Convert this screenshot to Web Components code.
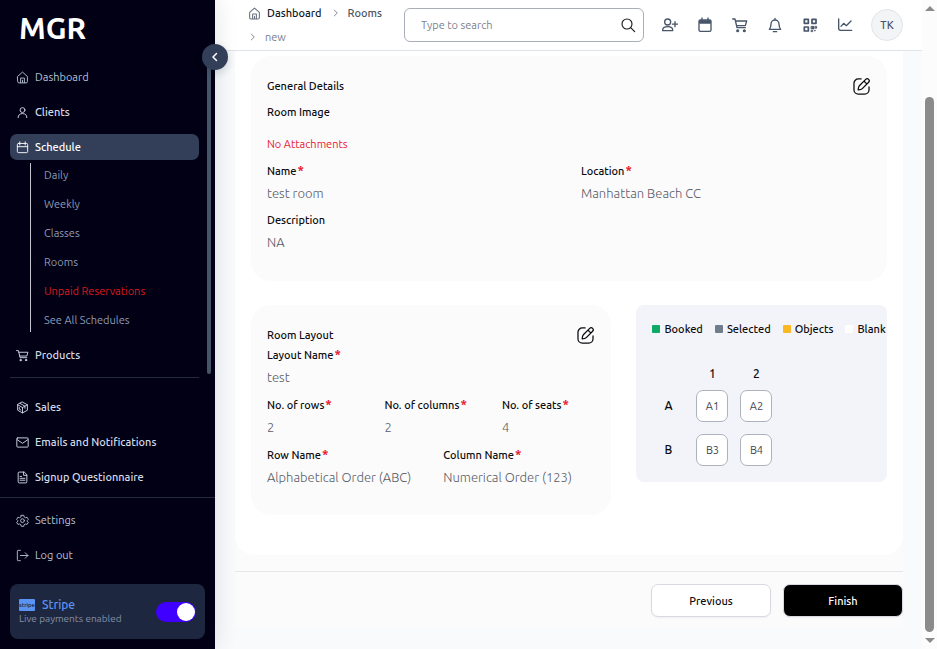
<!DOCTYPE html>
<html lang="en">
<head>
<meta charset="utf-8">
<meta name="viewport" content="width=device-width, initial-scale=1">
<title>MGR - Rooms</title>
<style>
  html, body { height: 100%; margin: 0; }
  body {
    font-family: Ubuntu, "Noto Sans", sans-serif;
    font-size: 11px; line-height: 16px; color: #0b0b0f; background: #f8fafc;
    --ink: #0b0b0f; --muted: #585c68; --danger: #e8192f;
    --body: 11px; --value: 13px;
  }
</style>
</head>
<body>
<app-shell>
  <app-sidebar slot="side"></app-sidebar>
  <app-header slot="head"></app-header>
  <room-review slot="main"></room-review>
  <scroll-rail slot="rail"></scroll-rail>
</app-shell>
<script>
const define = (name, html, setup) => {
  const template = document.createElement('template');
  template.innerHTML = html;
  customElements.define(name, class extends HTMLElement {
    connectedCallback() {
      if (this.shadowRoot) return;
      this.attachShadow({ mode: 'open' }).append(template.content.cloneNode(true));
      if (setup) setup.call(this, this.shadowRoot);
    }
  });
};

const ICONS = {
  home: '<path d="M3 10 12 2l9 8v9.500a2.500 2.500 0 0 1-2.500 2.500h-13A2.500 2.500 0 0 1 3 19.500z"/><path d="M8.500 21.500v-8.500h7v8.500M12 17v4"/>',
  user: '<circle cx="12" cy="7.500" r="4.500"/><path d="M4 21.500c0-5 3-7.500 8-7.500s8 2.500 8 7.500"/>',
  calendar: '<rect x="2.500" y="4.500" width="19" height="17" rx="2"/><path d="M7 1.500v6M17 1.500v6M2.500 10.500h19"/>',
  cart: '<path d="M1 3h3.500l3 13h12.500M5.200 6H22l-2 7H7"/><circle cx="8.500" cy="20.500" r="1.300" fill="currentColor"/><circle cx="18.500" cy="20.500" r="1.300" fill="currentColor"/>',
  box: '<path d="M12 2 21 7v10l-9 5-9-5V7z"/><path d="m3 7 9 5 9-5M12 12v10M7.500 4.500l9 5v4M6 12v3l3 1.700"/>',
  mail: '<rect x="1.500" y="3.500" width="21" height="17" rx="1.500"/><path d="m2.500 7 9.500 6.500L21.500 7"/>',
  file: '<path d="M14.500 2H6a2 2 0 0 0-2 2v16a2 2 0 0 0 2 2h12a2 2 0 0 0 2-2V7.500z"/><path d="M14 2v6h6M7.500 10h3M7.500 13.500h9M7.500 17h9"/>',
  gear: '<path d="M9.600 2.500h4.800l.7 3 2.400 1.400 3-.9 2.300 4-2.200 2.200v1l2.200 2-2.300 4-3-.8-2.400 1.300-.7 3H9.600l-.7-3-2.400-1.300-3 .8-2.300-4 2.200-2v-1L1.200 10l2.300-4 3 .9 2.400-1.400z"/><circle cx="12" cy="12.300" r="3.500"/>',
  logout: '<path d="M8 2.500H4a1.500 1.500 0 0 0-1.500 1.500v16A1.500 1.500 0 0 0 4 21.500h4M8 12h14M17 7l5 5-5 5"/>',
  left: '<path d="m15 5-7 7 7 7"/>',
  right: '<path d="m8 5 7 7-7 7"/>',
  search: '<circle cx="10.500" cy="10.500" r="7.500"/><path d="m16 16 6 6"/>',
  userplus: '<circle cx="8.500" cy="7.500" r="4.500"/><path d="M1 20.500v-1c0-3.500 2.500-5 7.500-5s7.500 1.500 7.500 5v1zM19.500 7v7.500M15.700 10.700h7.600"/>',
  calfill: '<rect x="3" y="4.500" width="18" height="17" rx="2"/><path d="M4 6h16v3H4z" fill="currentColor"/><path d="M7.500 1.500v4M16.500 1.500v4"/>',
  bell: '<path d="M12 2v2M3.500 18.500c2-2.500 2.500-4 2.500-8a6 6 0 0 1 12 0c0 4 .5 5.500 2.500 8zM9.500 22h5"/>',
  qr: '<g stroke-width="2.600"><rect x="3.500" y="3.500" width="6" height="6"/><rect x="15" y="3.500" width="6" height="6"/><rect x="3.500" y="15" width="6" height="6"/></g><path d="M14 14h4v4h-4zM20 14h2v3h-2zM14 20h2v2h-2zM19 20h1v1h-1z" fill="currentColor" stroke-width="1"/>',
  chart: '<path d="M2.500 3v14a3 3 0 0 0 3 3H22M6 14l4-4.500 4 3.500 7-7"/>',
  edit: '<path d="M11.500 2.500H8A5.500 5.500 0 0 0 2.500 8v8A5.500 5.500 0 0 0 8 21.500h8a5.500 5.500 0 0 0 5.500-5.500v-3.500"/><path d="m9.300 11 8-8a2.600 2.600 0 0 1 3.700 3.700l-8 8c-1 1-2.500 1.300-5.200 1.500.2-2.700.5-4.200 1.500-5.200zM15.500 5c.5 2 1.700 3.200 3.700 3.700"/>'
};
define('ui-icon', `<style>
  :host { display: inline-flex; flex: none; }
  svg { display: block; fill: none; stroke: currentColor; stroke-linecap: round; stroke-linejoin: round; }
</style><svg viewBox="0 0 24 24" aria-hidden="true"></svg>`, function (root) {
  const svg = root.querySelector('svg'), size = this.getAttribute('size') || 13;
  svg.setAttribute('width', size);
  svg.setAttribute('height', size);
  svg.setAttribute('stroke-width', this.getAttribute('weight') || 2);
  svg.innerHTML = ICONS[this.getAttribute('name')];
});

define('app-shell', `<style>
  :host { display: grid; grid-template: auto minmax(0, 1fr) / 215px minmax(0, 1fr) 15px; height: 100vh; overflow: hidden; }
  slot { display: block; min-height: 0; }
  [name=side] { grid-row: 1 / 3; position: relative; z-index: 3; }
  [name=head] { grid-column: 2; z-index: 1; }
  [name=main] { grid-area: 2 / 2; overflow: hidden; }
  [name=rail] { grid-area: 1 / 3 / 3 / 4; }
</style><slot name="side"></slot><slot name="head"></slot><slot name="main"></slot><slot name="rail"></slot>`);

define('nav-item', `<style>
  :host { display: block; }
  a { display: flex; align-items: center; gap: 6px; height: 26px; padding: 0 6px; border-radius: 7px; color: #d3dbe8; text-decoration: none; font-size: var(--body); font-weight: 500; }
  .icon { display: flex; }
  :host([soft]) a { color: #b8c2d4; font-weight: 400; }
  :host([active]) a { background: #333f59; color: #fff; }
</style><a href="#"><span class="icon"></span><slot></slot></a>`, function (root) {
  root.querySelector('.icon').innerHTML = `<ui-icon name="${this.getAttribute('icon')}" weight="1.7"></ui-icon>`;
});

define('sub-nav', `<style>
  :host { display: flex; flex-direction: column; gap: 5px; margin-left: 20px; padding-left: 13px; border-left: 1px solid #c3c6d0; }
  ::slotted(a) { color: #8d9bb7; font-size: var(--body); line-height: 24px; text-decoration: none; }
  ::slotted(a.alert) { color: #dc1822; }
</style><slot></slot>`);

define('stripe-card', `<style>
  :host { display: flex; align-items: center; justify-content: space-between; padding: 10px 9px; height: 35px; border-radius: 8px; background: #1e2740; }
  .title { display: flex; align-items: center; gap: 7px; color: #5b93f5; font-size: 12px; font-weight: 500; line-height: 14px; }
  .logo { width: 16px; height: 12px; border-radius: 1px; background: #5b93f5; color: #15203c; font-size: 6px; font-weight: 500; line-height: 11px; text-align: center; }
  small { display: block; color: #8490a8; font-size: 10px; line-height: 13px; }
  input { appearance: none; display: flex; width: 40px; height: 20px; margin: 0; padding: 1px; border-radius: 10px; background: #4000ff; }
  input::before { content: ""; width: 18px; height: 18px; border-radius: 50%; background: #fff; }
  input:checked { justify-content: flex-end; }
</style><label for="live"><span class="title"><span class="logo">stripe</span>Stripe</span><small>Live payments enabled</small></label><input id="live" type="checkbox" role="switch" checked>`);

define('app-sidebar', `<style>
  :host { display: flex; flex-direction: column; height: 100%; background: #020014; box-shadow: 0 0 22px rgba(15, 23, 42, .12); }
  .logo { padding: 12px 0 0 19px; height: 44px; box-sizing: border-box; color: #fff; font-size: 30px; font-weight: 700; line-height: 32px; }
  .scroll { display: flex; flex: 1; min-height: 0; padding-top: 13px; }
  nav { flex: 1; display: flex; flex-direction: column; gap: 9px; padding: 7px 8px 0 10px; }
  .thumb { width: 4px; height: 317px; margin-right: 4px; border-radius: 2px; background: #475569; }
  sub-nav { margin-top: -6px; margin-bottom: 1px; }
  hr { width: 100%; height: 1px; margin: 0 0 7px; border: 0; background: #222a3c; }
  .foot { display: flex; flex-direction: column; gap: 9px; padding: 9px 10px 10px; border-top: 1px solid #222a3c; }
  stripe-card { margin-top: 7px; }
  .toggle { position: absolute; right: -13px; top: 44px; display: grid; place-items: center; width: 26px; height: 26px; padding: 0; border: 0; border-radius: 50%; background: #333f59; color: #fff; box-shadow: 0 3px 8px rgba(15, 23, 42, .16); }
</style>
<div class="logo">MGR</div>
<div class="scroll">
  <nav aria-label="Main">
    <nav-item soft icon="home">Dashboard</nav-item>
    <nav-item icon="user">Clients</nav-item>
    <nav-item active icon="calendar">Schedule</nav-item>
    <sub-nav><a href="#">Daily</a><a href="#">Weekly</a><a href="#">Classes</a><a href="#">Rooms</a><a href="#" class="alert">Unpaid Reservations</a><a href="#">See All Schedules</a></sub-nav>
    <nav-item icon="cart">Products</nav-item>
    <hr>
    <nav-item icon="box">Sales</nav-item>
    <nav-item icon="mail">Emails and Notifications</nav-item>
    <nav-item icon="file">Signup Questionnaire</nav-item>
  </nav>
  <div class="thumb"></div>
</div>
<div class="foot">
  <nav-item soft icon="gear">Settings</nav-item>
  <nav-item soft icon="logout">Log out</nav-item>
  <stripe-card></stripe-card>
</div>
<button class="toggle" aria-label="Collapse sidebar"><ui-icon name="left" size="12" weight="3"></ui-icon></button>`);

define('app-header', `<style>
  :host { display: flex; align-items: center; height: 50px; padding: 0 19px 0 33px; background: #fff; border-bottom: 1px solid #dfe4ea; }
  .crumbs { flex: 0 0 140px; margin-right: 16px; display: flex; flex-wrap: wrap; align-items: center; row-gap: 8px; font-weight: 500; }
  .crumbs a { display: flex; align-items: center; gap: 6px; color: #4b5563; text-decoration: none; }
  .crumbs a:first-child { color: #111827; }
  .crumbs a:last-child { color: #7a8190; font-weight: 400; }
  .crumbs ui-icon { color: #6b7280; }
  .sep { margin: 0 7px 0 9px; }
  .sep.first { margin-left: 0; }
  .search { flex: 1; display: flex; align-items: center; height: 34px; box-sizing: border-box; padding: 0 7px 0 16px; border: 1px solid #a9aeb8; border-radius: 6px; }
  input { flex: 1; min-width: 0; padding: 0; border: 0; outline: 0; font: inherit; color: inherit; background: none; }
  input::placeholder { color: #7d828c; opacity: 1; }
  button { display: grid; place-items: center; padding: 0; border: 0; background: none; color: #475569; }
  .search button { color: #18181b; }
  .actions { display: flex; gap: 19px; margin: 0 18px; }
  .avatar { width: 32px; height: 32px; border-radius: 50%; border: 1px solid #e2e4e8; background: #f3f4f6; font: inherit; font-weight: 500; }
</style>
<nav class="crumbs" aria-label="Breadcrumb">
  <a href="#"><ui-icon name="home"></ui-icon>Dashboard</a>
  <ui-icon class="sep" name="right" size="10"></ui-icon><a href="#">Rooms</a>
  <ui-icon class="sep first" name="right" size="10"></ui-icon><a href="#">new</a>
</nav>
<form class="search" role="search"><input type="search" aria-label="Search" placeholder="Type to search"><button type="button" aria-label="Search"><ui-icon name="search" size="16" weight="1.7"></ui-icon></button></form>
<div class="actions">
  <button aria-label="Add client"><ui-icon name="userplus" size="16"></ui-icon></button>
  <button aria-label="Calendar"><ui-icon name="calfill" size="16"></ui-icon></button>
  <button aria-label="Cart"><ui-icon name="cart" size="16"></ui-icon></button>
  <button aria-label="Notifications"><ui-icon name="bell" size="16"></ui-icon></button>
  <button aria-label="QR code"><ui-icon name="qr" size="16"></ui-icon></button>
  <button aria-label="Reports"><ui-icon name="chart" size="16"></ui-icon></button>
</div>
<button class="avatar" aria-label="Account">TK</button>`);

define('form-field', `<style>
  :host { display: block; min-width: 0; }
  .label { color: var(--ink); font-weight: 500; line-height: 18px; white-space: nowrap; }
  .label span { color: var(--danger); font-size: 13px; font-weight: 700; line-height: 12px; margin-left: 1px; }
  .value { margin-top: 4px; color: var(--muted); font-size: var(--value); line-height: 19px; white-space: nowrap; font-weight: 300; }
</style><div class="label"></div><div class="value"><slot></slot></div>`, function (root) {
  const label = root.querySelector('.label');
  label.textContent = this.getAttribute('label');
  if (this.hasAttribute('required')) label.insertAdjacentHTML('beforeend', '<span>*</span>');
});

define('detail-card', `<style>
  :host { display: block; padding: 20px 16px 28px; border-radius: 20px; background: #fbfbfb; }
  header { display: flex; justify-content: space-between; height: 20px; margin-bottom: 1px; }
  h2 { margin: 0; font-size: var(--body); font-weight: 500; line-height: 20px; }
  button { display: grid; place-items: center; height: 20px; padding: 0; border: 0; background: none; color: var(--ink); }
</style><header><h2></h2><button><ui-icon name="edit" size="19" weight="1.6"></ui-icon></button></header><slot></slot>`, function (root) {
  root.querySelector('h2').textContent = this.getAttribute('heading');
  root.querySelector('button').setAttribute('aria-label', 'Edit ' + this.getAttribute('heading'));
});

define('seat-map', `<style>
  :host { display: block; min-width: 0; padding: 16px; border-radius: 8px; background: #f3f4f9; }
  ul { display: flex; gap: 12px; margin: 0; padding: 0; list-style: none; white-space: nowrap; line-height: 16px; font-weight: 500; }
  li { display: flex; align-items: center; gap: 4px; }
  i { width: 8px; height: 8px; border-radius: 1px; background: var(--c); }
  .cols, .seats { display: grid; grid-template-columns: repeat(3, 32px); gap: 12px; text-align: center; font-size: 12px; font-weight: 500; }
  .cols { margin: 29px 0 8px; }
  .cols span:first-child { grid-column: 2; }
  .seats span { line-height: 32px; }
  button { height: 32px; padding: 0; border: 1px solid #adb2c0; border-radius: 7px; background: #fff; color: #3f4454; font: inherit; font-size: 11px; font-weight: 400; }
</style>
<ul>
  <li><i style="--c:#0fa968"></i>Booked</li><li><i style="--c:#717c8c"></i>Selected</li>
  <li><i style="--c:#fbb724"></i>Objects</li><li><i style="--c:#fff"></i>Blank</li>
</ul>
<div class="cols"><span>1</span><span>2</span></div>
<div class="seats"><span>A</span><button>A1</button><button>A2</button><span>B</span><button>B3</button><button>B4</button></div>`);

define('room-review', `<style>
  :host { display: block; height: 100%; box-sizing: border-box; padding: 0 19px 0 20px; background: #f8fafc; }
  .page { background: #fbfbfc; padding-bottom: 12px; }
  .sheet { padding: 5px 16px 40px; border-radius: 0 0 20px 20px; background: #fff; }
  .line { margin-top: 6px; line-height: 20px; font-weight: 500; }
  .none { margin-top: 12px; line-height: 20px; color: var(--danger); font-weight: 400; }
  .grid { display: grid; gap: 4px 24px; }
  .two { grid-template-columns: 1fr 1fr; }
  .three { grid-template-columns: repeat(3, 1fr); }
  .gap { margin-top: 9px; }
  .tight { margin-top: 8px; }
  .tight + .gap { margin-top: 8px; padding-bottom: 1px; }
  .lower { display: grid; grid-template-columns: minmax(0, 59fr) minmax(0, 41fr); gap: 25px; align-items: start; margin-top: 24px; }
  footer { display: flex; justify-content: flex-end; gap: 12px; margin-top: 16px; padding-top: 12px; border-top: 1px solid #e4e6ea; }
  footer button { width: 120px; height: 33px; padding: 0; border: 1px solid #d7dae0; border-radius: 7px; background: #fff; color: var(--ink); font: inherit; font-weight: 500; box-shadow: 0 1px 2px rgba(0, 0, 0, .05); }
  footer button.primary { background: #000; color: #fff; }
</style>
<div class="page">
  <div class="sheet">
    <detail-card heading="General Details">
      <div class="line">Room Image</div>
      <div class="none">No Attachments</div>
      <div class="grid two tight">
        <form-field label="Name" required>test room</form-field>
        <form-field label="Location" required>Manhattan Beach CC</form-field>
      </div>
      <form-field class="gap" label="Description">NA</form-field>
    </detail-card>
    <div class="lower">
      <detail-card heading="Room Layout">
        <form-field label="Layout Name" required>test</form-field>
        <div class="grid three gap">
          <form-field label="No. of rows" required>2</form-field>
          <form-field label="No. of columns" required>2</form-field>
          <form-field label="No. of seats" required>4</form-field>
        </div>
        <div class="grid two gap">
          <form-field label="Row Name" required>Alphabetical Order (ABC)</form-field>
          <form-field label="Column Name" required>Numerical Order (123)</form-field>
        </div>
      </detail-card>
      <seat-map></seat-map>
    </div>
  </div>
  <footer><button>Previous</button><button class="primary">Finish</button></footer>
</div>`);

define('scroll-rail', `<style>
  :host { display: flex; flex-direction: column; align-items: center; height: 100%; box-sizing: border-box; padding: 6px 0; background: #fcfcfc; }
  svg { display: block; flex: none; fill: #8b8b8b; }
  .track { flex: 1; display: flex; flex-direction: column; justify-content: flex-end; margin: 6px 0; width: 9px; }
  .thumb { height: 87%; border-radius: 5px; background: #8b8b8b; }
</style><svg width="10" height="5"><path d="M5 0l5 5H0z"/></svg><div class="track"><div class="thumb"></div></div><svg width="10" height="5"><path d="M0 0h10L5 5z"/></svg>`);
</script>
</body>
</html>
